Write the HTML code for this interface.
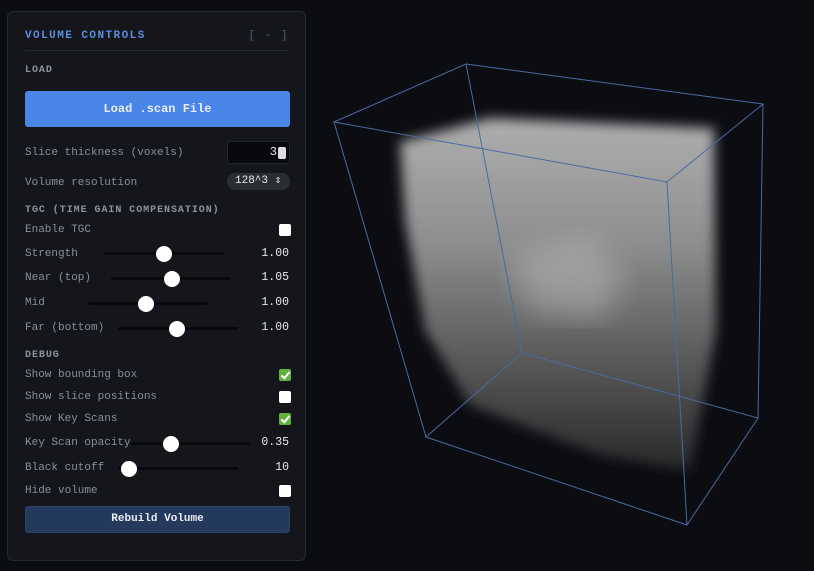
<!DOCTYPE html>
<html><head><meta charset="utf-8"><style>
*{box-sizing:border-box;margin:0;padding:0}
body{width:814px;height:571px;background:#0b0d12;overflow:hidden;position:relative;font-family:"Liberation Mono",monospace;}
.panel{position:absolute;left:7px;top:11px;width:299px;height:550px;background:#14161b;border:1px solid #262a31;border-radius:6px;}
.t{position:absolute;font-size:11px;letter-spacing:0;color:#8a8f98;white-space:nowrap;line-height:14px}
.h{color:#8e939c;font-size:10px;letter-spacing:0.95px;font-weight:bold}
.v{color:#e6e8eb;right:16px;font-size:11.5px}
.btn{position:absolute;left:17px;width:265px;border-radius:3px;color:#e8edf5;font-weight:bold;text-align:center;font-size:12px;letter-spacing:0}
.track{position:absolute;height:3px;background:#08090c;border-radius:2px}
.knob{position:absolute;width:16px;height:16px;border-radius:50%;background:#fff;margin-top:-6.5px}
.cb{position:absolute;left:271px;width:12px;height:12px;border-radius:2px;background:#fff}
.cb.on{background:#5fb33d}
.cb.on::after{content:"";position:absolute;left:4px;top:1px;width:3px;height:7px;border:solid #fff;border-width:0 2px 2px 0;transform:rotate(40deg)}
</style></head><body>
<svg width="814" height="571" style="position:absolute;left:0;top:0">
<defs>
<filter id="bl" x="-20%" y="-20%" width="140%" height="140%"><feGaussianBlur stdDeviation="6"/></filter>
<filter id="bl2"><feGaussianBlur stdDeviation="14"/></filter>
<linearGradient id="g" x1="0" y1="0" x2="0" y2="1">
<stop offset="0" stop-color="#bdbdbd"/><stop offset="0.35" stop-color="#9a9a9a"/><stop offset="0.7" stop-color="#5e5e5e"/><stop offset="1" stop-color="#2c2c2c"/></linearGradient>
</defs>
<polygon points="400,142 490,118 714,128 716,330 690,470 600,455 470,405 425,330 405,220" fill="url(#g)" filter="url(#bl)" opacity="0.92"/>
<polygon points="510,255 590,235 625,280 600,320 530,310" fill="#c0c0c0" filter="url(#bl2)" opacity="0.45"/>
<g stroke="#4a6aa0" stroke-width="1" fill="none">
<polygon points="334,122 466,64 763,104 667,182"/>
<polygon points="426,437 522,353 758,418 687,525"/>
<line x1="334" y1="122" x2="426" y2="437"/><line x1="466" y1="64" x2="522" y2="353"/>
<line x1="763" y1="104" x2="758" y2="418"/><line x1="667" y1="182" x2="687" y2="525"/>
</g></svg>
<div class="panel">
<div class="t h" style="left:17px;top:17px;color:#5b8fe0;font-size:11px;letter-spacing:1.45px">VOLUME CONTROLS</div>
<div class="t" style="right:16px;top:17px;color:#5b606a;letter-spacing:1.5px">[ - ]</div>
<div style="position:absolute;left:17px;right:16px;top:38px;height:1px;background:#262a31"></div>
<div class="t h" style="left:17px;top:52px">LOAD</div>
<div class="btn" style="top:79px;height:36px;line-height:36px;background:#4a86e8">Load .scan File</div>
<div class="t" style="left:17px;top:134px">Slice thickness (voxels)</div>
<div style="position:absolute;left:219px;top:129px;width:63px;height:23px;background:#08090c;border:1px solid #23262c;border-radius:3px;color:#e6e8eb;font-size:12px;text-align:right;padding:3px 12px 0 0">3</div>
<div style="position:absolute;left:270px;top:135px;width:8px;height:12px;background:#ddd;border-radius:2px"></div>
<div class="t" style="left:17px;top:164px">Volume resolution</div>
<div style="position:absolute;left:219px;top:161px;width:63px;height:17px;background:#2a2d32;border-radius:8px;color:#e6e8eb;font-size:11px;padding:1px 0 0 8px;line-height:15px">128^3 &#8661;</div>
<div class="t h" style="left:17px;top:192px">TGC (TIME GAIN COMPENSATION)</div>
<div class="t" style="left:17px;top:211px">Enable TGC</div><div class="cb" style="top:212px"></div>
<div class="t" style="left:17px;top:235px">Strength</div>
<div class="track" style="left:96px;width:120px;top:240px"></div><div class="knob" style="left:148px;top:240px"></div>
<div class="t v" style="top:235px">1.00</div>
<div class="t" style="left:17px;top:259px">Near (top)</div>
<div class="track" style="left:103px;width:120px;top:265px"></div><div class="knob" style="left:156px;top:265px"></div>
<div class="t v" style="top:259px">1.05</div>
<div class="t" style="left:17px;top:284px">Mid</div>
<div class="track" style="left:80px;width:120px;top:290px"></div><div class="knob" style="left:130px;top:290px"></div>
<div class="t v" style="top:284px">1.00</div>
<div class="t" style="left:17px;top:309px">Far (bottom)</div>
<div class="track" style="left:110px;width:120px;top:315px"></div><div class="knob" style="left:161px;top:315px"></div>
<div class="t v" style="top:309px">1.00</div>
<div class="t h" style="left:17px;top:337px">DEBUG</div>
<div class="t" style="left:17px;top:356px">Show bounding box</div><div class="cb on" style="top:357px"></div>
<div class="t" style="left:17px;top:378px">Show slice positions</div><div class="cb" style="top:379px"></div>
<div class="t" style="left:17px;top:400px">Show Key Scans</div><div class="cb on" style="top:401px"></div>
<div class="t" style="left:17px;top:424px">Key Scan opacity</div>
<div class="track" style="left:123px;width:120px;top:430px"></div><div class="knob" style="left:155px;top:430px"></div>
<div class="t v" style="top:424px">0.35</div>
<div class="t" style="left:17px;top:449px">Black cutoff</div>
<div class="track" style="left:110px;width:120px;top:455px"></div><div class="knob" style="left:113px;top:455px"></div>
<div class="t v" style="top:449px">10</div>
<div class="t" style="left:17px;top:472px">Hide volume</div><div class="cb" style="top:473px"></div>
<div class="btn" style="top:494px;height:27px;line-height:25px;background:#243a5c;font-size:11px;border:1px solid #2c4468">Rebuild Volume</div>
</div>
</body></html>
